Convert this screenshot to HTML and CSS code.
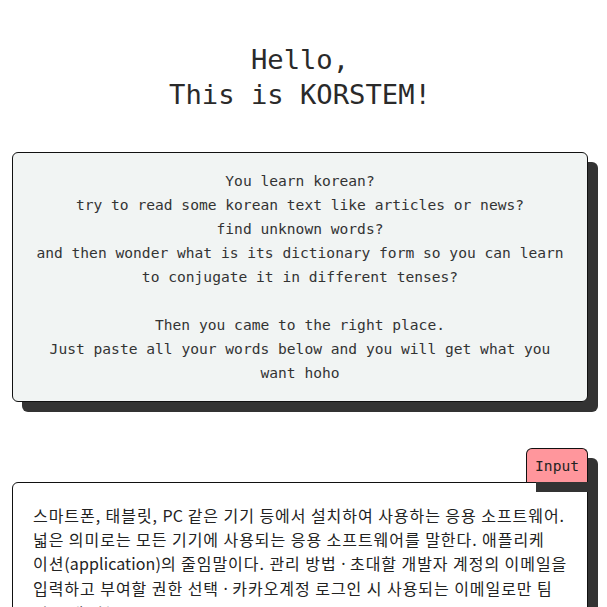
FILE: index.html
```html
<!DOCTYPE html>
<html lang="en">
<head>
<meta charset="utf-8">
<link rel="stylesheet" href="styles.css">
</head>
<body>
<main class="page">
  <h1 class="title">Hello,<br>This is KORSTEM!</h1>
  <section class="intro">
    <p>You learn korean?<br>try to read some korean text like articles or news?<br>find unknown words?<br>and then wonder what is its dictionary form so you can learn<br>to conjugate it in different tenses?</p>
    <p class="gap">Then you came to the right place.<br>Just paste all your words below and you will get what you<br>want hoho</p>
  </section>
  <section class="input-block">
    <div class="tab-row"><span class="tab">Input</span></div>
    <div class="input-card">
      <span class="line">스마트폰, 태블릿, <span class="lat">PC</span> 같은 기기 등에서 설치하여 사용하는 응용 소프트웨어.</span>
      <span class="line">넓은 의미로는 모든 기기에 사용되는 응용 소프트웨어를 말한다. 애플리케</span>
      <span class="line">이션<span class="lat">(application)</span>의 줄임말이다. 관리 방법 <span class="dot">·</span> 초대할 개발자 계정의 이메일을</span>
      <span class="line">입력하고 부여할 권한 선택 <span class="dot">·</span> 카카오계정 로그인 시 사용되는 이메일로만 팀</span>
      <span class="line">원 초대 가능</span>
    </div>
  </section>
</main>
</body>
</html>
```
FILE: styles.css
```css
html, body {
  margin: 0;
  padding: 0;
  background: #fff;
  overflow: hidden;
}
.page {
  padding: 42px 19px 0 12px;
  font-family: "DejaVu Sans Mono", "Liberation Mono", monospace;
  color: #333;
}
.title {
  margin: 0;
  text-align: center;
  font-weight: normal;
  font-size: 27.2px;
  line-height: 35px;
  color: #2a2a2a;
}
.intro {
  margin-top: 40px;
  background: #f1f4f3;
  border: 1px solid #111;
  border-radius: 6px;
  box-shadow: 10px 10px 0 #333;
  padding: 16px 20px;
  text-align: center;
  font-size: 14.6px;
  line-height: 24px;
}
.intro p {
  margin: 0;
}
.intro .gap {
  margin-top: 24px;
}
.input-block {
  margin-top: 46px;
}
.tab-row {
  display: flex;
  justify-content: flex-end;
}
.tab {
  background: #ff969c;
  border: 1px solid #111;
  border-bottom: none;
  border-radius: 6px 6px 0 0;
  box-shadow: 10px 10px 0 #333;
  height: 33px;
  line-height: 33px;
  padding: 0 8px 0 8px;
  font-size: 14.6px;
  color: #222;
}
.input-card {
  background: #fff;
  border: 1px solid #111;
  border-radius: 6px 0 0 0;
  box-shadow: 10px 10px 0 #333;
  padding: 20px 20px;
  height: 200px;
  font-family: "Noto Sans CJK KR", "Noto Sans", sans-serif;
  font-size: 16px;
  line-height: 24px;
  letter-spacing: 0.95px;
  color: #222;
}
.line {
  display: block;
  white-space: nowrap;
}
.lat {
  letter-spacing: 0.1px;
}
.dot {
  font-family: "Noto Sans", sans-serif;
  letter-spacing: 0;
}
```
